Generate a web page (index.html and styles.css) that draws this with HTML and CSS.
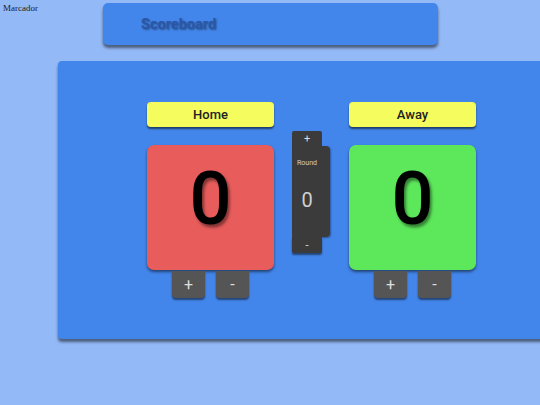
FILE: index.html
```html
<!DOCTYPE html>
<html>
<head>
<meta charset="utf-8">
<link rel="stylesheet" href="styles.css">
</head>
<body>
<div class="top">
  <div class="page-title">Marcador</div>
  <header class="header"><h1>Scoreboard</h1></header>
</div>
<main class="panel">
  <div class="board">
    <section class="team">
      <div class="label">Home</div>
      <div class="score home">0</div>
      <div class="btns"><button class="btn">+</button><button class="btn">-</button></div>
    </section>
    <section class="round">
      <button class="rbtn">+</button>
      <div class="rbox"><span class="rlabel">Round</span><span class="rnum">0</span></div>
      <button class="rbtn">-</button>
    </section>
    <section class="team">
      <div class="label">Away</div>
      <div class="score away">0</div>
      <div class="btns"><button class="btn">+</button><button class="btn">-</button></div>
    </section>
  </div>
</main>
</body>
</html>
```
FILE: styles.css
```css
html, body { margin: 0; padding: 0; }
body {
  background: #94b9f7;
  width: 540px;
  height: 405px;
  overflow: hidden;
  font-family: Roboto, "Liberation Sans", sans-serif;
}
.top {
  display: flex;
  align-items: flex-start;
  height: 61px;
}
.page-title {
  font-family: "Liberation Serif", serif;
  font-size: 9px;
  color: #222;
  width: 100px;
  padding: 3px 0 0 3px;
}
.header {
  margin-top: 3px;
  width: 335px;
  height: 42px;
  background: #4386eb;
  border-radius: 5px;
  box-shadow: 0 3px 3px rgba(0, 0, 0, 0.5);
  display: flex;
  align-items: center;
}
.header h1 {
  margin: 0 0 0 38px;
  font-size: 14.5px;
  font-weight: 700;
  color: #2a57a8;
  text-shadow: 1px 1px 2px rgba(0, 0, 0, 0.4);
}
.panel {
  margin-left: 58px;
  width: 490px;
  height: 278px;
  background: #4386eb;
  border-radius: 4px 0 0 4px;
  box-shadow: 0 3px 3px rgba(0, 0, 0, 0.5);
  box-sizing: border-box;
  padding: 41px 0 0 89px;
}
.board {
  display: flex;
  align-items: flex-start;
}
.team {
  width: 127px;
  display: flex;
  flex-direction: column;
  align-items: center;
}
.label {
  width: 100%;
  height: 25px;
  background: #f5fc5e;
  border-radius: 4px;
  box-shadow: 0 2px 2px rgba(0, 0, 0, 0.55);
  display: flex;
  align-items: center;
  justify-content: center;
  font-size: 13px;
  font-weight: 500;
  color: #222;
}
.score {
  margin-top: 18px;
  width: 100%;
  height: 125px;
  box-sizing: border-box;
  padding-bottom: 17px;
  border-radius: 7px;
  box-shadow: 0 2px 3px rgba(0, 0, 0, 0.5);
  display: flex;
  align-items: center;
  justify-content: center;
  font-size: 74px;
  font-weight: 500;
  line-height: 1;
  color: #000;
  text-shadow: 2px 3px 3px rgba(0, 0, 0, 0.45);
}
.home { background: #e85d5c; }
.away { background: #5de85c; }
.btns {
  display: flex;
  gap: 11px;
  margin-top: 1px;
}
.btn {
  width: 33px;
  height: 27px;
  border: 0;
  border-radius: 0 0 4px 4px;
  background: #555;
  color: #ddd;
  font-family: Roboto, sans-serif;
  font-size: 16px;
  padding: 0;
  box-shadow: 0 2px 2px rgba(0, 0, 0, 0.5);
}
.round {
  width: 38px;
  margin: 29px 19px 0 18px;
  display: flex;
  flex-direction: column;
}
.rbtn {
  width: 30px;
  height: 15px;
  border: 0;
  padding: 0;
  background: #3b3b3b;
  color: #ddd;
  font-family: Roboto, sans-serif;
  font-size: 11px;
  line-height: 15px;
}
.round .rbtn:first-child { border-radius: 2px 2px 0 0; height: 15px; }
.round .rbtn:last-child { border-radius: 0 0 2px 2px; height: 16px; box-shadow: 0 2px 2px rgba(0, 0, 0, 0.5); }
.rbox {
  width: 38px;
  height: 91px;
  background: #3b3b3b;
  border-radius: 0 4px 4px 0;
  box-shadow: 1px 1px 2px rgba(0, 0, 0, 0.35);
  display: flex;
  flex-direction: column;
  align-items: center;
  padding-right: 8px;
  box-sizing: border-box;
}
.rlabel {
  margin-top: 13px;
  font-size: 7px;
  color: #d0d0d0;
}
.rnum {
  margin-top: 21px;
  font-size: 20px;
  color: #d0d0d0;
}
```
